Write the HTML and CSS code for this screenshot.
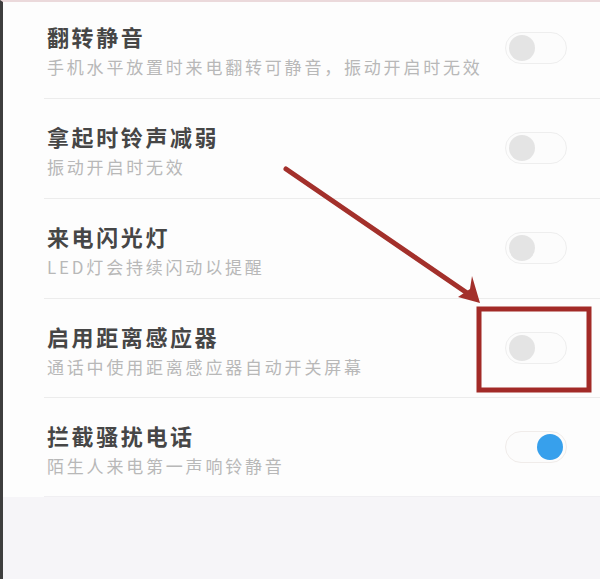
FILE: index.html
```html
<!DOCTYPE html>
<html lang="zh-CN">
<head>
<meta charset="utf-8">
<title>来电设置</title>
<link rel="stylesheet" href="styles.css">
</head>
<body>
<div class="screen">
  <ul class="list">
    <li class="row row-first">
      <div class="text">
        <div class="title">翻转静音</div>
        <div class="desc">手机水平放置时来电翻转可静音，振动开启时无效</div>
      </div>
      <span class="toggle"><span class="knob"></span></span>
    </li>
    <li class="row">
      <div class="text">
        <div class="title">拿起时铃声减弱</div>
        <div class="desc">振动开启时无效</div>
      </div>
      <span class="toggle"><span class="knob"></span></span>
    </li>
    <li class="row">
      <div class="text">
        <div class="title">来电闪光灯</div>
        <div class="desc">LED灯会持续闪动以提醒</div>
      </div>
      <span class="toggle"><span class="knob"></span></span>
    </li>
    <li class="row row-short">
      <div class="text">
        <div class="title">启用距离感应器</div>
        <div class="desc">通话中使用距离感应器自动开关屏幕</div>
      </div>
      <span class="toggle"><span class="knob"></span></span>
    </li>
    <li class="row row-short">
      <div class="text">
        <div class="title">拦截骚扰电话</div>
        <div class="desc">陌生人来电第一声响铃静音</div>
      </div>
      <span class="toggle toggle-on"><span class="knob"></span></span>
    </li>
  </ul>
  <div class="footer"></div>
  <svg class="annotation" width="600" height="579" viewBox="0 0 600 579" aria-hidden="true">
    <line x1="286" y1="169" x2="470" y2="295" stroke="#a3302b" stroke-width="5" stroke-linecap="round"/>
    <polygon points="480,303 458,297 470,289 472,276" fill="#a3302b"/>
    <rect x="479" y="309" width="110" height="81" fill="none" stroke="#a22a27" stroke-width="5"/>
  </svg>
</div>
</body>
</html>
```

FILE: styles.css
```css
* { box-sizing: border-box; }
html, body {
  margin: 0;
  padding: 0;
  background: #f6f5f8;
}
.screen {
  position: relative;
  width: 600px;
  height: 579px;
  background: #fdfdfd;
  border-left: 3px solid #3e3e3e;
  border-top: 2px solid #ebd9db;
  font-family: "Noto Sans CJK SC", "Noto Sans", sans-serif;
  display: flex;
  flex-direction: column;
  overflow: hidden;
}
.list {
  list-style: none;
  margin: 0;
  padding: 0;
  background: #fdfdfd;
}
.row {
  height: 100px;
  margin-left: 41px;
  padding: 22px 33px 0 3px;
  border-bottom: 1px solid #ececec;
  display: flex;
  align-items: flex-start;
  justify-content: space-between;
}
.row-first { height: 97px; padding-top: 19px; }
.row-short { height: 99px; }
.row:last-child { border-bottom: 1px solid #f0eff2; }
.text { display: flex; flex-direction: column; }
.title {
  font-size: 22px;
  line-height: 30px;
  letter-spacing: 2.6px;
  color: #464646;
  font-weight: 700;
}
.desc {
  margin-top: 2px;
  font-size: 17px;
  line-height: 28px;
  letter-spacing: 2.8px;
  color: #b8b8b8;
}
.toggle {
  margin-top: 11px;
  width: 62px;
  height: 32px;
  border-radius: 16px;
  border: 1px solid #eeeeee;
  background: #fcfcfc;
  display: flex;
  align-items: center;
  padding: 0 3px;
  flex: none;
}
.knob {
  width: 26px;
  height: 26px;
  border-radius: 50%;
  background: #e4e4e4;
}
.toggle-on { justify-content: flex-end; border-color: #f0ecea; }
.toggle-on .knob { background: #37a0ec; }
.footer {
  flex: 1;
  background: #f6f5f8;
}
.annotation {
  position: absolute;
  left: -3px;
  top: -2px;
  pointer-events: none;
}
```
